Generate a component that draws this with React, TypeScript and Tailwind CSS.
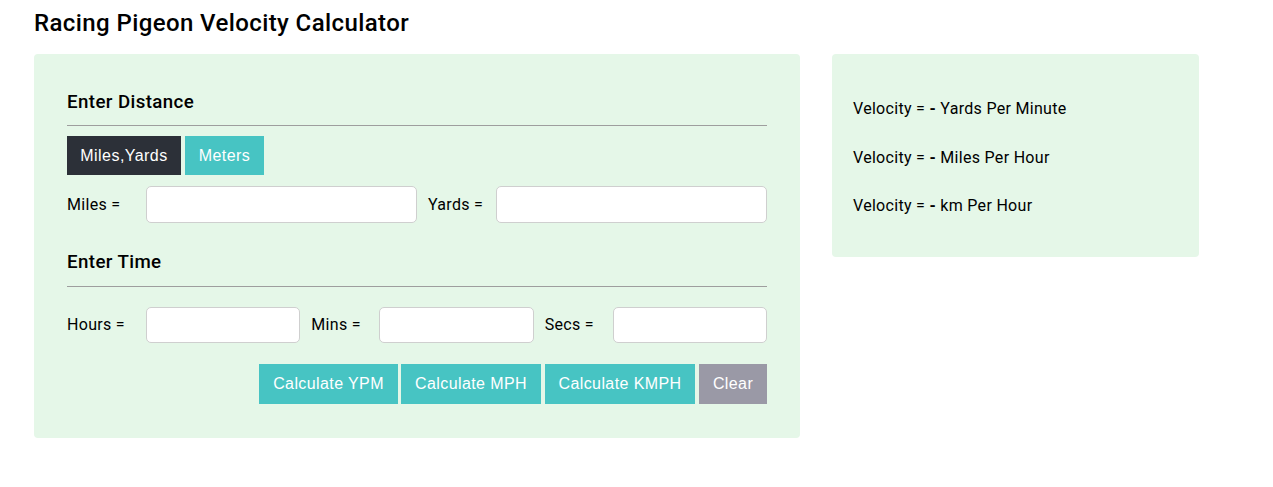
import React from "react"

const roboto = { fontFamily: "Roboto, 'Noto Sans', sans-serif" }
const arial = { fontFamily: "'Liberation Sans', Arial, sans-serif" }

function Field({ label, first, wide }: { label: string; first?: boolean; wide?: boolean }) {
  return (
    <>
      <label className={`${first ? "w-[79px]" : "ml-[11px] w-[68px]"} shrink-0 text-[16px] tracking-[0.3px] text-black`}>{label}</label>
      <input
        type="text"
        className={`${wide ? "h-[37px]" : "h-[36px]"} min-w-0 flex-1 rounded-[5px] border border-[#cfcfcf] bg-white px-3 outline-none`}
      />
    </>
  )
}

export default function App() {
  return (
    <div className="min-h-[487px] bg-white px-[34px] pt-[9px]" style={roboto}>
      <h1 className="text-[24px] font-medium leading-[28px] tracking-[0.4px] text-black">Racing Pigeon Velocity Calculator</h1>
      <div className="mt-[17px] flex items-start gap-[32px]">
        <div className="w-[766px] rounded-[4px] bg-[#e5f7e8] px-[33px] pb-[34px] pt-[37px]">
          <h2 className="text-[18.72px] font-medium leading-[22px] tracking-[0.4px] text-black">Enter Distance</h2>
          <hr className="mt-[12px] border-0 border-t border-[#9e9e9e]" />
          <div className="mt-[10px] flex gap-[4px] tracking-[0.45px]" style={arial}>
            <button className="h-[39px] w-[114px] bg-[#2c3038] text-[16px] text-white">Miles,Yards</button>
            <button className="h-[39px] w-[79px] bg-[#47c4c3] text-[16px] text-white">Meters</button>
          </div>
          <div className="mt-[11px] flex items-center">
            <Field label="Miles =" first wide />
            <Field label="Yards =" wide />
          </div>
          <h2 className="mt-[28px] text-[18.72px] font-medium leading-[22px] tracking-[0.4px] text-black">Enter Time</h2>
          <hr className="mt-[13px] border-0 border-t border-[#9e9e9e]" />
          <div className="mt-[20px] flex items-center">
            <Field label="Hours =" first />
            <Field label="Mins =" />
            <Field label="Secs =" />
          </div>
          <div className="mt-[21px] flex justify-end gap-[3px] tracking-[0.4px]" style={arial}>
            <button className="h-[40px] w-[139px] bg-[#47c4c3] text-[16px] text-white">Calculate YPM</button>
            <button className="h-[40px] w-[140px] bg-[#47c4c3] text-[16px] text-white">Calculate MPH</button>
            <button className="ml-[1px] h-[40px] w-[150px] bg-[#47c4c3] text-[16px] text-white">Calculate KMPH</button>
            <button className="ml-[1px] h-[40px] w-[68px] bg-[#9a99a6] text-[16px] text-white">Clear</button>
          </div>
        </div>
        <div className="w-[367px] rounded-[4px] bg-[#e5f7e8] px-[21px] pb-[42px] pt-[45px] text-[16px] leading-[19px] tracking-[0.3px] text-black">
          <p>
            Velocity = <b>-</b> Yards Per Minute
          </p>
          <p className="mt-[30px]">
            Velocity = <b>-</b> Miles Per Hour
          </p>
          <p className="mt-[29px]">
            Velocity = <b>-</b> km Per Hour
          </p>
        </div>
      </div>
    </div>
  )
}
